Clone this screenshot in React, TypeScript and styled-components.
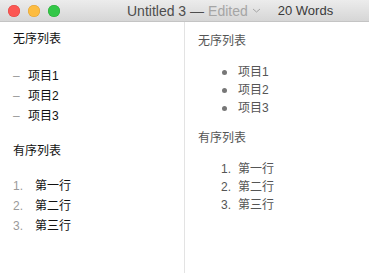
import styled, { createGlobalStyle } from 'styled-components';

const GlobalStyle = createGlobalStyle`
  html, body {
    margin: 0;
    padding: 0;
    background: #fff;
  }
  body {
    font-family: "Liberation Sans", "Noto Sans CJK SC", sans-serif;
  }
`;

const Window = styled.div`
  width: 369px;
  height: 273px;
  display: flex;
  flex-direction: column;
  overflow: hidden;
`;

const TitleBar = styled.div`
  height: 22px;
  flex: none;
  display: flex;
  align-items: center;
  padding-left: 8px;
  background: linear-gradient(#ececec, #d6d6d6);
  border-bottom: 1px solid #c4c4c4;
  box-sizing: border-box;
`;

const Lights = styled.div`
  display: flex;
  gap: 8px;
`;

const Light = styled.span<{ $color: string; $edge: string }>`
  width: 12px;
  height: 12px;
  border-radius: 50%;
  background: ${(p) => p.$color};
  box-shadow: inset 0 0 0 0.5px ${(p) => p.$edge};
`;

const Title = styled.div`
  margin-left: 67px;
  font-size: 14px;
  color: #4d4d4d;
  display: flex;
  align-items: center;
  white-space: nowrap;
`;

const Edited = styled.span`
  color: #a5a5a5;
  margin-left: 4px;
  display: flex;
  align-items: center;
  gap: 4px;
`;

const WordCount = styled.div`
  margin-left: 17px;
  font-size: 13px;
  color: #3a3a3a;
`;

const Body = styled.div`
  flex: 1;
  display: grid;
  grid-template-columns: 184px 1px 1fr;
`;

const Divider = styled.div`
  background: #e3e3e3;
`;

const Source = styled.div`
  padding: 7px 0 0 13px;
  font-size: 12px;
  line-height: 20px;
  color: #111;
`;

const SourceLine = styled.div<{ $gap?: number }>`
  display: flex;
  margin-top: ${(p) => p.$gap ?? 0}px;
`;

const Marker = styled.span<{ $w: number }>`
  width: ${(p) => p.$w}px;
  color: #9a9a9a;
  flex: none;
`;

const Preview = styled.div`
  padding: 10px 0 0 13px;
  font-size: 12px;
  line-height: 18px;
  color: #555;
`;

const PHeading = styled.div<{ $gap?: number }>`
  margin-top: ${(p) => p.$gap ?? 0}px;
`;

const PList = styled.div`
  margin-top: 13px;
  padding-left: 23px;
`;

const PItem = styled.div`
  display: flex;
  align-items: center;
`;

const Dot = styled.span`
  width: 5px;
  height: 5px;
  border-radius: 50%;
  background: #777;
  margin: 0 11px 0 1px;
`;

const Num = styled.span`
  width: 17px;
`;

export default function App() {
  return (
    <Window>
      <GlobalStyle />
      <TitleBar>
        <Lights>
          <Light $color="#fc5753" $edge="#de4640" />
          <Light $color="#fdbc40" $edge="#de9f34" />
          <Light $color="#33c748" $edge="#27aa35" />
        </Lights>
        <Title>
          Untitled 3 —
          <Edited>
            Edited
            <svg width="9" height="5" viewBox="0 0 9 5">
              <path d="M1 1l3.5 3 3.5-3" fill="none" stroke="#a5a5a5" strokeWidth="1" />
            </svg>
          </Edited>
        </Title>
        <WordCount>20 Words</WordCount>
      </TitleBar>
      <Body>
        <Source>
          <SourceLine>无序列表</SourceLine>
          <SourceLine $gap={17}><Marker $w={15}>–</Marker>项目1</SourceLine>
          <SourceLine><Marker $w={15}>–</Marker>项目2</SourceLine>
          <SourceLine><Marker $w={15}>–</Marker>项目3</SourceLine>
          <SourceLine $gap={15}>有序列表</SourceLine>
          <SourceLine $gap={15}><Marker $w={22}>1.</Marker>第一行</SourceLine>
          <SourceLine><Marker $w={22}>2.</Marker>第二行</SourceLine>
          <SourceLine><Marker $w={22}>3.</Marker>第三行</SourceLine>
        </Source>
        <Divider />
        <Preview>
          <PHeading>无序列表</PHeading>
          <PList>
            <PItem><Dot />项目1</PItem>
            <PItem><Dot />项目2</PItem>
            <PItem><Dot />项目3</PItem>
          </PList>
          <PHeading $gap={12}>有序列表</PHeading>
          <PList>
            <PItem><Num>1.</Num>第一行</PItem>
            <PItem><Num>2.</Num>第二行</PItem>
            <PItem><Num>3.</Num>第三行</PItem>
          </PList>
        </Preview>
      </Body>
    </Window>
  );
}
